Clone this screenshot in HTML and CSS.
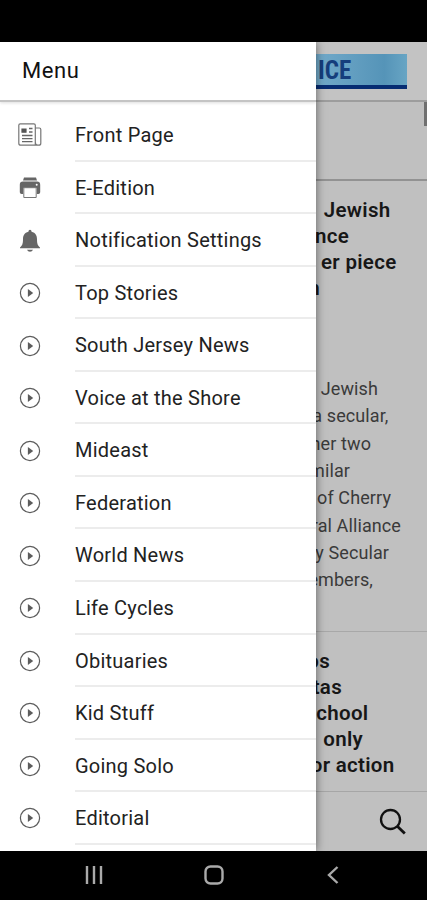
FILE: index.html
```html
<!DOCTYPE html>
<html lang="en">
<head>
<meta charset="utf-8">
<title>Menu</title>
<link rel="stylesheet" href="styles.css">
</head>
<body>
<svg width="0" height="0" class="defs">
  <symbol id="play" viewBox="0 0 24 24"><circle cx="12" cy="12" r="9.6" fill="none" stroke="#5c5c5c" stroke-width="1.2"/><path d="M9.9 8v8l5.3-4z" fill="#5c5c5c"/></symbol>
</svg>
<div class="status"></div>
<div class="app">
  <nav class="drawer">
    <header class="title">Menu</header>
    <ul class="menu">
      <li><svg viewBox="0 0 24 24" fill="none" stroke="#777" stroke-width="1.2"><path d="M17.3 21.500V2.200q0-1.400-1.400-1.400H2.200Q.8.800.8 2.200v18q0 2 2 2h18q2 0 2-2V6.500q0-1.500-1.500-1.500h-4M17.300 19q0 3.200 2.400 3.200"/><path d="M4 6h4v3.200H4z" fill="#555" stroke="#555"/><path d="M11 5.500h3.500M11 9h3.500M4 12.500h10.500M4 15.600h10.500M4 18.700h10.500" stroke="#666" stroke-width="1.300"/></svg><span>Front Page</span></li>
      <li><svg viewBox="0 0 24 24" fill="#666"><path d="M6 1.500h12l1 3H5zM5 5.500h14q3.200 0 3.200 3.200v7.500q0 1.800-1.800 1.800h-1.600v-6H5.200v6H3.600q-1.800 0-1.800-1.800V8.700Q1.800 5.500 5 5.500z"/><circle cx="18.700" cy="8.700" r="1" fill="#fff"/><path d="M5.800 11.700h12.400v9.800H5.800z" fill="#fff" stroke="#777"/></svg><span>E-Edition</span></li>
      <li><svg viewBox="0 0 24 24" fill="#666"><path d="M12 .8q1.500 0 1.600 1.900C17.500 3.500 19 6.500 19 10c0 5 .8 6.500 3 8.500v.8H2v-.8C4.200 16.500 5 15 5 10c0-3.500 1.500-6.500 5.400-7.300Q10.500.8 12 .8zM9 20.800h6q-.8 2-3 2t-3-2z"/></svg><span>Notification Settings</span></li>
      <li><svg><use href="#play"/></svg><span>Top Stories</span></li>
      <li><svg><use href="#play"/></svg><span>South Jersey News</span></li>
      <li><svg><use href="#play"/></svg><span>Voice at the Shore</span></li>
      <li><svg><use href="#play"/></svg><span>Mideast</span></li>
      <li><svg><use href="#play"/></svg><span>Federation</span></li>
      <li><svg><use href="#play"/></svg><span>World News</span></li>
      <li><svg><use href="#play"/></svg><span>Life Cycles</span></li>
      <li><svg><use href="#play"/></svg><span>Obituaries</span></li>
      <li><svg><use href="#play"/></svg><span>Kid Stuff</span></li>
      <li><svg><use href="#play"/></svg><span>Going Solo</span></li>
      <li><svg><use href="#play"/></svg><span>Editorial</span></li>
    </ul>
  </nav>
  <main class="page">
    <header class="masthead"><div class="logo">ICE</div></header>
    <div class="ad"><i class="thumb"></i></div>
    <article class="story lead">
      <h2><span class="a1">Jewish</span><span class="a2">nce</span><span class="a3">er piece</span><span class="a4">n</span></h2>
      <p><span class="b1">Jewish</span><span class="b2">a secular,</span><span class="b3">her two</span><span class="b4">milar</span><span class="b5">of Cherry</span><span class="b6">ral Alliance</span><span class="b7">y Secular</span><span class="b8">embers,</span></p>
    </article>
    <article class="story second">
      <h2><span class="c1">os</span><span class="c2">tas</span><span class="c3">school</span><span class="c4">only</span><span class="c5">or action</span></h2>
    </article>
    <footer class="tools"><svg viewBox="0 0 28 28" fill="none" stroke="#111" stroke-width="2.300"><circle cx="11.500" cy="11.500" r="9.500"/><path d="M18.300 18.300l7.500 7.300" stroke-width="2.800"/></svg></footer>
  </main>
</div>
<footer class="system">
  <svg viewBox="0 0 20 20" stroke="#aaa" stroke-width="2.400"><path d="M3 1v18M10 1v18M17 1v18"/></svg>
  <svg viewBox="0 0 20 20" fill="none" stroke="#aaa" stroke-width="2.400"><rect x="1.500" y="1.500" width="17" height="17" rx="5"/></svg>
  <svg viewBox="0 0 20 20" fill="none" stroke="#aaa" stroke-width="2.400"><path d="M14.500 2L6 10l8.500 8"/></svg>
</footer>
</body>
</html>
```
FILE: styles.css
```css
* { box-sizing: border-box; }
body { margin: 0; width: 427px; height: 900px; display: flex; flex-direction: column; overflow: hidden; background: #000; font-family: Roboto, sans-serif; color: #222; }
.defs { display: none; }
.status { height: 42px; flex: none; background: #000; }
.app { height: 809px; flex: none; display: flex; overflow: hidden; background: #c0c0c0; }
.drawer { width: 316px; flex: none; z-index: 1; overflow: hidden; background: #fff; box-shadow: 0 0 9px rgba(0, 0, 0, .5); }
.title { height: 60px; padding-left: 22px; line-height: 58px; font-size: 22px; font-weight: 400; letter-spacing: .6px; color: #111; border-bottom: 2px solid #c4c4c4; box-shadow: 0 1px 3px #ddd; }
.menu { list-style: none; margin: 0; padding: 7.200px 0 0; }
.menu li { display: flex; align-items: center; height: 52.540px; padding-left: 17.500px; }
.menu svg { width: 24px; height: 24px; flex: none; margin-right: 33.500px; }
.menu span { flex: 1; height: 100%; line-height: 52px; font-size: 20px; letter-spacing: .23px; border-bottom: 2px solid #ececec; }
.page { flex: 1; min-width: 0; display: flex; flex-direction: column; }
.masthead { height: 60px; flex: none; padding-top: 12px; border-bottom: 2px solid #9d9d9d; background: #c3c3c3; }
.logo { width: 91px; height: 35px; padding-left: 2px; line-height: 33px; font-size: 25px; font-weight: 700; color: #153e7c; font-family: "Roboto Condensed", Roboto, sans-serif; background: linear-gradient(90deg, #72aaca, #5594b8 75%, #68a5c4); border-bottom: 4px solid #062c72; }
.ad { height: 79px; flex: none; border-bottom: 2px solid #929292; }
.thumb { display: block; width: 3px; height: 24px; margin-left: auto; background: #707070; }
.story { display: flex; flex-direction: column; flex: none; }
.lead { height: 451px; padding-top: 16px; border-bottom: 1px solid #a8a8a8; }
.second { height: 160px; padding-top: 16px; border-bottom: 1px solid #a6a6a6; }
h2, p { margin: 0; }
h2 span, p span { display: flex; justify-content: flex-end; white-space: nowrap; }
h2 { font-size: 20.500px; font-weight: 600; letter-spacing: .3px; color: #171717; }
h2 span { height: 26.100px; line-height: 26px; }
p { margin-top: 73.600px; font-size: 18px; letter-spacing: .1px; color: #3a3a3a; }
p span { height: 27.350px; line-height: 27px; }
.a1 { padding-right: 36.500px; }
.a2 { padding-right: 78px; }
.a3 { padding-right: 30.500px; }
.a4 { padding-right: 107px; }
.b1 { padding-right: 49px; }
.b2 { padding-right: 38.500px; }
.b3 { padding-right: 56px; }
.b4 { padding-right: 77px; }
.b5 { padding-right: 36px; }
.b6 { padding-right: 26px; }
.b7 { padding-right: 38px; }
.b8 { padding-right: 54px; }
.c1 { padding-right: 97px; }
.c2 { padding-right: 85px; }
.c3 { padding-right: 58.500px; }
.c4 { padding-right: 64px; }
.c5 { padding-right: 32.500px; }
.tools { flex: 1; display: flex; justify-content: flex-end; align-items: center; padding-right: 20px; }
.tools svg { width: 28px; height: 28px; }
.system { height: 49px; display: flex; align-items: center; justify-content: center; gap: 99.500px; padding-bottom: 1px; }
.system svg { width: 20px; height: 20px; }
```
